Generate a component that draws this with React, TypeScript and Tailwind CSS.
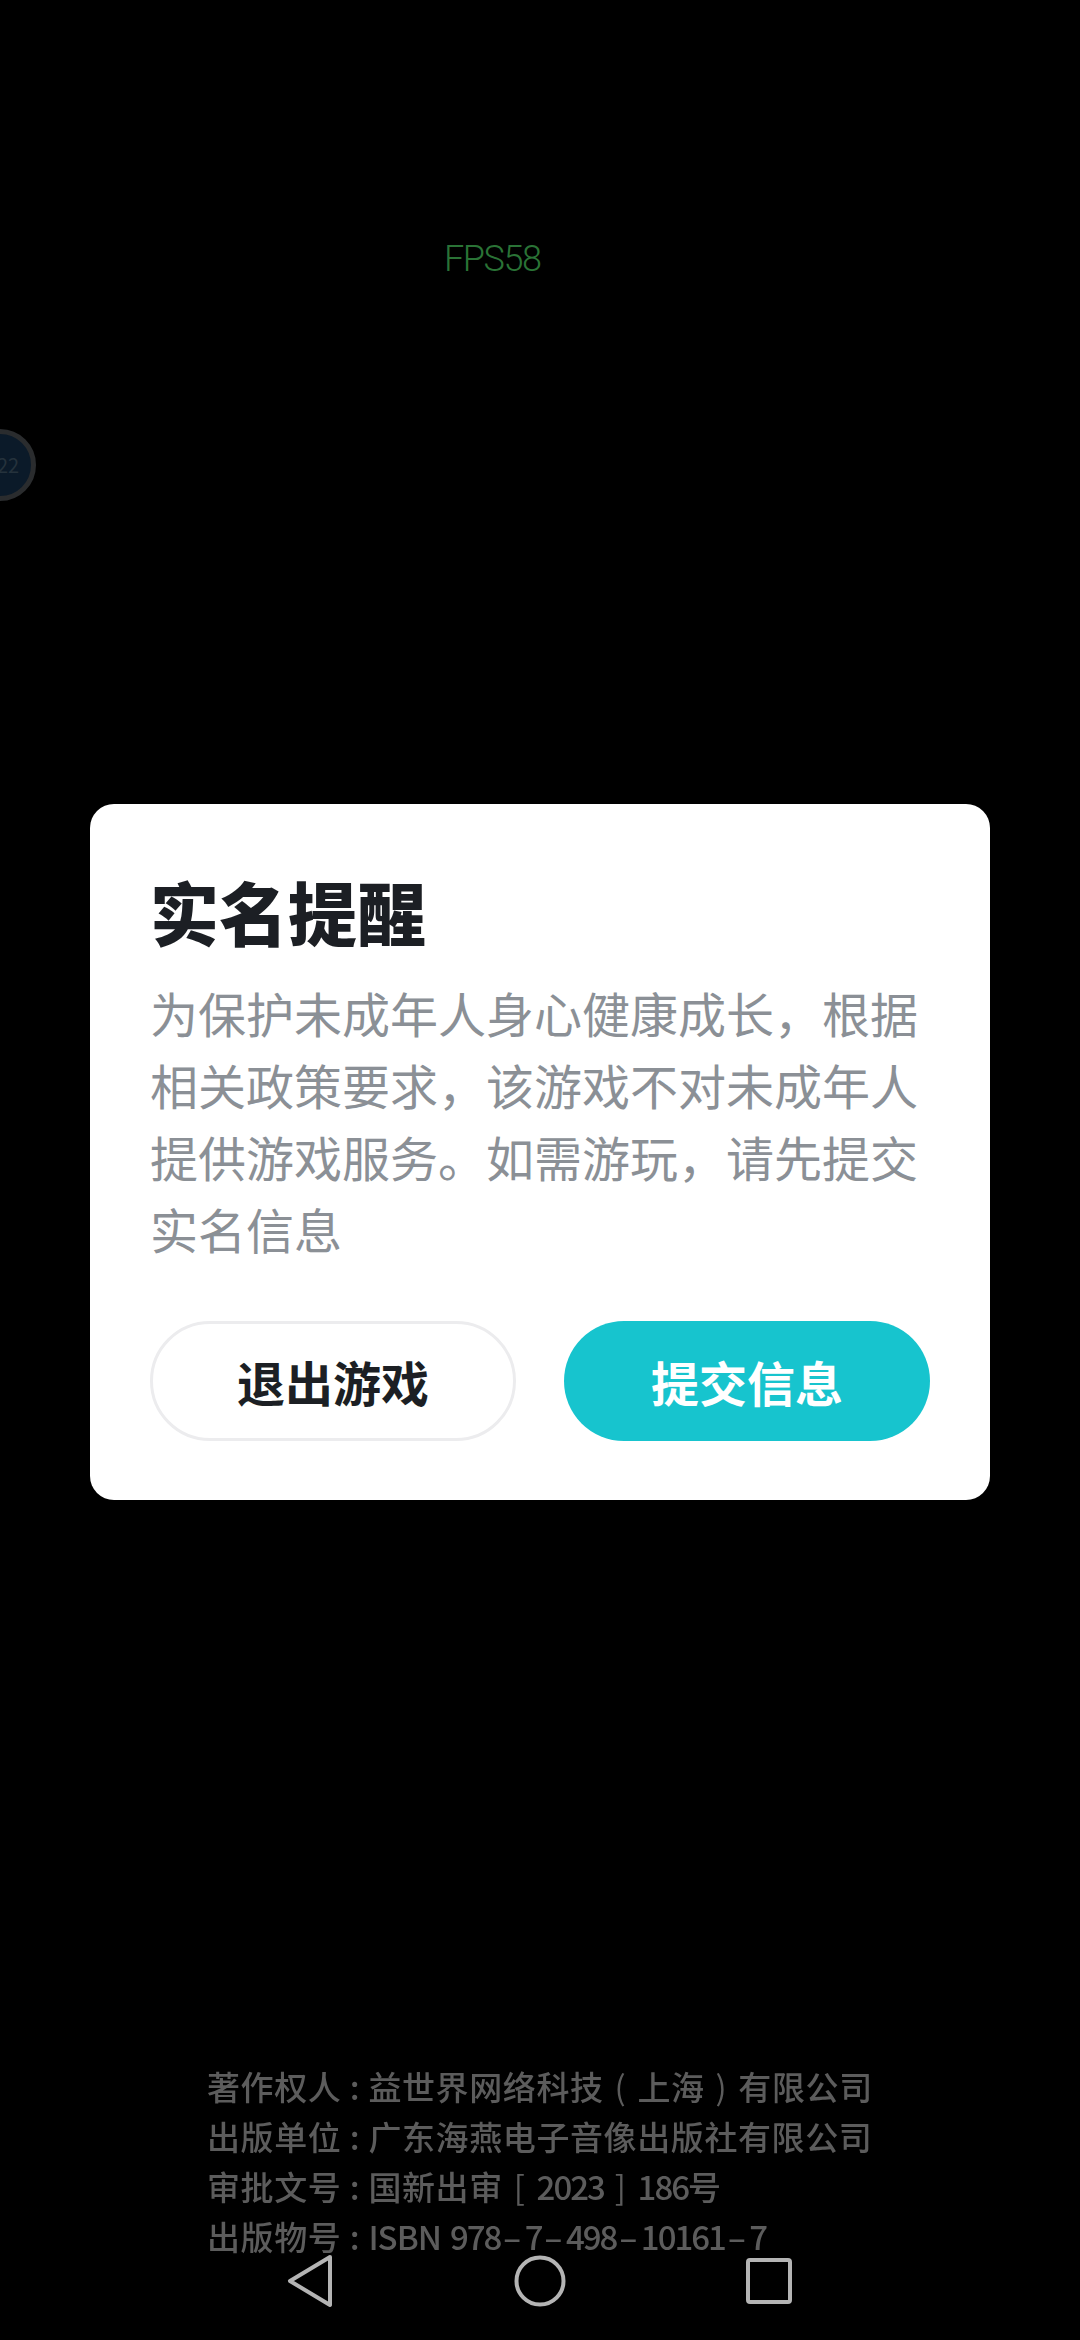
import React from "react";

const cjk = "font-['Noto_Sans_CJK_SC','Noto_Sans',sans-serif]";

const Num = ({ children }: { children: React.ReactNode }) => (
  <span className="tracking-[-2px]">{children}</span>
);

const Gap = ({ children }: { children: React.ReactNode }) => (
  <span className="mx-[11px] font-normal">{children}</span>
);

const Dash = () => <span className="mx-[3px]">–</span>;

const legalLines = [
  {
    label: "著作权人",
    value: (
      <>
        益世界网络科技<Gap>(</Gap>上海<Gap>)</Gap>有限公司
      </>
    ),
  },
  { label: "出版单位", value: <>广东海燕电子音像出版社有限公司</> },
  {
    label: "审批文号",
    value: (
      <>
        国新出审<Gap>[</Gap>
        <Num>2023</Num>
        <Gap>]</Gap>
        <Num>186</Num>号
      </>
    ),
  },
  {
    label: "出版物号",
    value: (
      <>
        <span className="mr-[9px] tracking-[-1px]">ISBN</span>
        <Num>978</Num>
        <Dash />
        <Num>7</Num>
        <Dash />
        <Num>498</Num>
        <Dash />
        <Num>10161</Num>
        <Dash />
        <Num>7</Num>
      </>
    ),
  },
];

const NavBar = () => (
  <div className="mt-[-7px] flex h-[54px] items-center justify-between pl-[287px] pr-[288px]">
    {/* back */}
    <svg width="46" height="54" viewBox="0 0 46 54" fill="none">
      <path
        d="M43 3 L3 27 L43 51 Z"
        stroke="#b4b4b4"
        strokeWidth="4"
        strokeLinejoin="round"
      />
    </svg>
    {/* home */}
    <svg width="52" height="52" viewBox="0 0 52 52" fill="none">
      <circle cx="26" cy="26" r="23.5" stroke="#b4b4b4" strokeWidth="4" />
    </svg>
    {/* recents */}
    <svg width="46" height="46" viewBox="0 0 46 46" fill="none">
      <rect x="2" y="2" width="42" height="42" rx="2" stroke="#b4b4b4" strokeWidth="4" />
    </svg>
  </div>
);

const App = () => {
  return (
    <div className={`relative flex h-[2340px] w-[1080px] flex-col overflow-hidden bg-black ${cjk}`}>
      {/* floating ball, sits half off the screen edge */}
      <div className="absolute left-[-36px] top-[429px] flex h-[72px] w-[72px] items-center justify-center rounded-full border-[5px] border-[#2a2c2e] bg-[#0b1a29]">
        <span className="ml-[16px] text-[20px] text-[#25323c]">22</span>
      </div>

      {/* FPS */}
      <div className="mt-[237px] h-[44px] pl-[444px] font-['Roboto',sans-serif] text-[36px] leading-[44px] font-light tracking-[-1.4px] text-[#2a7336]">
        FPS58
      </div>

      {/* dialog */}
      <div className="mx-[90px] mt-[523px] flex h-[696px] flex-col rounded-[24px] bg-white px-[60px] pt-[67px]">
        <h1 className="text-[69px] leading-[80px] font-black text-[#1c1f24]">实名提醒</h1>
        <p className="mt-[25px] text-[48px] leading-[72px] text-[#8b9096]">
          为保护未成年人身心健康成长，根据相关政策要求，该游戏不对未成年人提供游戏服务。如需游玩，请先提交实名信息
        </p>
        <div className="mt-[57px] flex justify-between">
          <button className="flex h-[120px] w-[366px] items-center justify-center rounded-full border-[3px] border-[#ececee] text-[48px] font-bold text-[#1c1f24]">
            退出游戏
          </button>
          <button className="flex h-[120px] w-[366px] items-center justify-center rounded-full bg-[#17c4ce] text-[48px] font-bold text-white">
            提交信息
          </button>
        </div>
      </div>

      {/* publishing info */}
      <div className="mt-[561px] pl-[207px] text-[33px] leading-[50px] font-medium tracking-[0.6px] whitespace-pre text-[#5c5c5c] blur-[0.7px]">
        {legalLines.map((line) => (
          <div key={line.label} className="flex">
            <span>{line.label}</span>
            <span className="w-[27px] text-center">:</span>
            <span>{line.value}</span>
          </div>
        ))}
      </div>

      <NavBar />
    </div>
  );
};

export default App;
